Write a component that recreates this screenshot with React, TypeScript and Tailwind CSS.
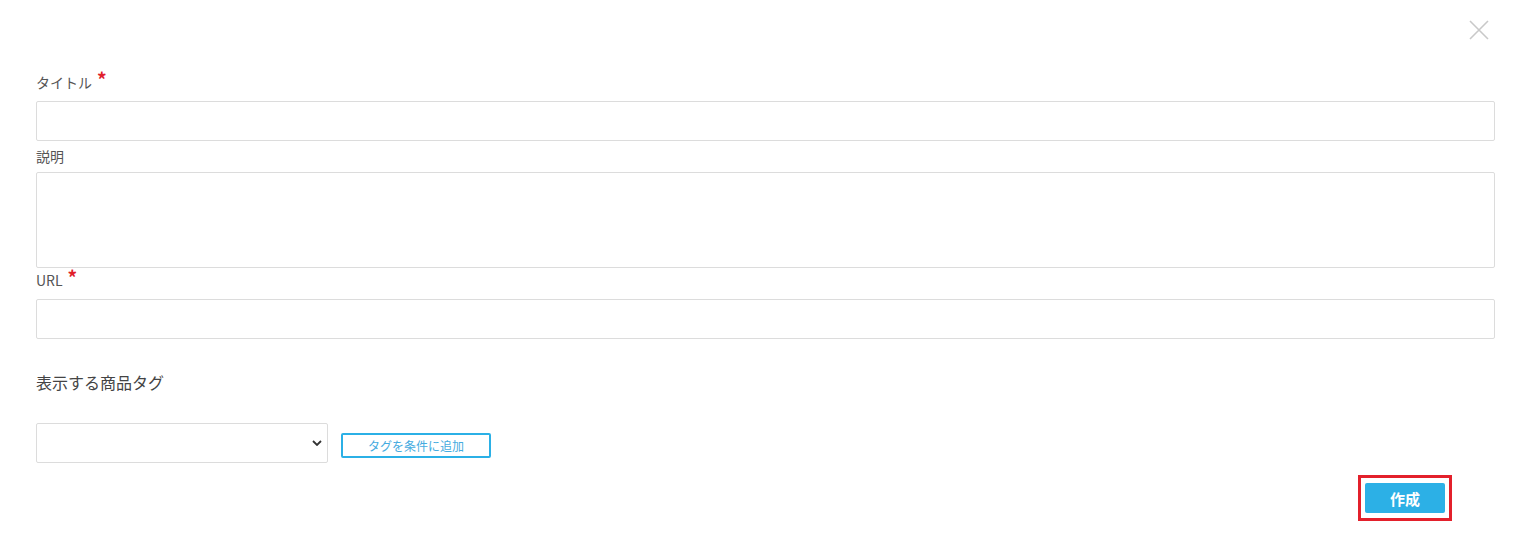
import { useState } from "react";

const font = { fontFamily: '"Noto Sans CJK JP", "Noto Sans", sans-serif' };

function Label({ text, required }: { text: string; required?: boolean }) {
  return (
    <div className="flex items-start h-5 text-[14px] leading-5 text-[#555]">
      <span>{text}</span>
      {required && (
        <span className="ml-[5px] -mt-[3px] text-[19px] leading-5 font-bold text-[#e0202a]">*</span>
      )}
    </div>
  );
}

export default function App() {
  const [title, setTitle] = useState("");
  const [desc, setDesc] = useState("");
  const [url, setUrl] = useState("");
  const [tag, setTag] = useState("");

  return (
    <div className="w-[1528px] h-[548px] bg-white" style={font}>
      {/* ヘッダー (閉じるボタン) */}
      <div className="flex justify-end h-[72px] pt-5 pr-[39px]">
        <button className="w-5 h-5 text-[#c9c9c9]">
          <svg viewBox="0 0 20 20" className="w-5 h-5" stroke="currentColor" strokeWidth="1.6" fill="none">
            <path d="M1 1 L19 19 M19 1 L1 19" />
          </svg>
        </button>
      </div>

      <div className="px-[36px] pr-[33px]">
        <Label text="タイトル" required />
        <input
          value={title}
          onChange={(e) => setTitle(e.target.value)}
          className="mt-[9px] block w-full h-10 border border-[#dcdcdc] rounded-[2px] px-3 outline-none"
        />

        <div className="mt-[5px]">
          <Label text="説明" />
        </div>
        <textarea
          value={desc}
          onChange={(e) => setDesc(e.target.value)}
          className="mt-[6px] block w-full h-24 border border-[#dcdcdc] rounded-[2px] px-3 py-2 outline-none resize-none"
        />

        <div className="mt-[2px]">
          <Label text="URL" required />
        </div>
        <input
          value={url}
          onChange={(e) => setUrl(e.target.value)}
          className="mt-[9px] block w-full h-10 border border-[#dcdcdc] rounded-[2px] px-3 outline-none"
        />

        <div className="mt-[31px] text-[16px] leading-6 text-[#444]">表示する商品タグ</div>

        <div className="mt-[29px] flex items-start gap-[13px]">
          <div className="relative w-[292px] h-10">
            <select
              value={tag}
              onChange={(e) => setTag(e.target.value)}
              className="appearance-none w-full h-10 border border-[#dcdcdc] rounded-[2px] px-3 bg-white outline-none"
            >
              <option value=""></option>
            </select>
            <svg
              viewBox="0 0 10 6"
              className="absolute right-[6px] top-[17px] w-[10px] h-[6px] pointer-events-none"
              fill="none"
              stroke="#333"
              strokeWidth="1.8"
            >
              <path d="M1 1 L5 5 L9 1" />
            </svg>
          </div>
          <button className="mt-[10px] w-[150px] h-[25px] border-2 border-[#2bb0e6] rounded-[2px] text-[12px] leading-none text-[#45abe0]">
            タグを条件に追加
          </button>
        </div>

        <div className="mt-3 flex justify-end pr-[43px]">
          <div className="border-[3px] border-[#e3202b] px-1 py-[5px]">
            <button className="w-20 h-[30px] bg-[#2cb0e6] rounded-[2px] text-white font-bold text-[15px] leading-none">
              作成
            </button>
          </div>
        </div>
      </div>
    </div>
  );
}
